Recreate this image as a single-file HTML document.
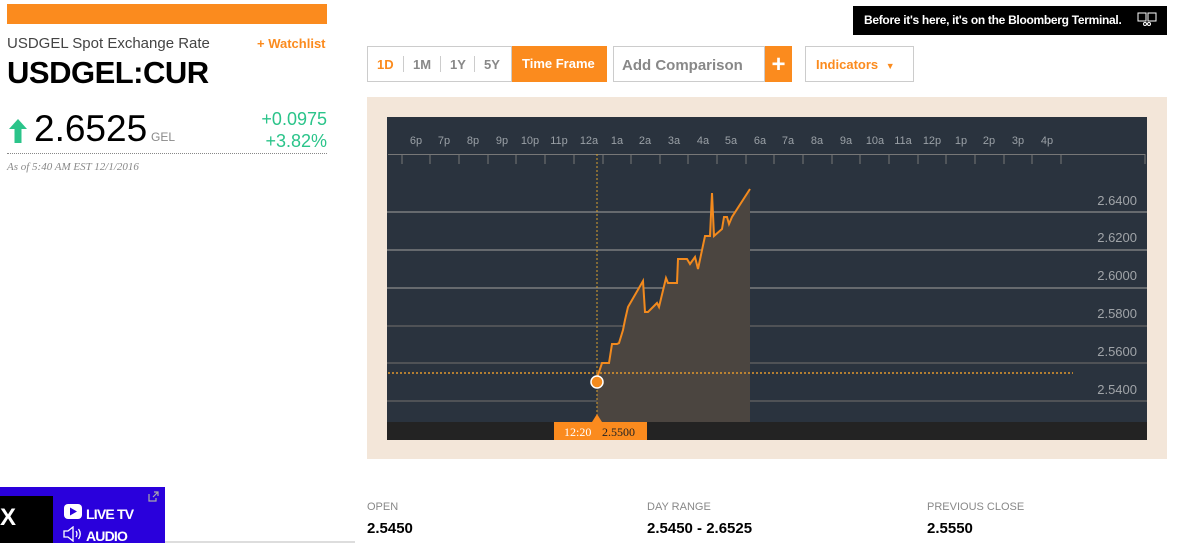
<!DOCTYPE html>
<html><head><meta charset="utf-8"><style>
*{margin:0;padding:0;box-sizing:border-box}
body{width:1191px;height:543px;overflow:hidden;background:#fff;font-family:"Liberation Sans",sans-serif;position:relative}
.a{position:absolute}
.btn{position:absolute;top:46px;height:36px;border:1px solid #ccc;font-weight:bold;font-size:14px}
</style></head><body>
<div class="a" style="left:7px;top:4px;width:320px;height:20px;background:#fb8b1e"></div>
<div class="a" style="left:7px;top:35px;font-size:15px;color:#444">USDGEL Spot Exchange Rate</div>
<div class="a" style="left:257px;top:36px;font-size:13px;color:#fb8b1e;font-weight:bold">+ Watchlist</div>
<div class="a" style="left:7px;top:55px;font-size:31px;font-weight:bold;color:#000;letter-spacing:-0.5px">USDGEL:CUR</div>
<svg class="a" style="left:8px;top:118px" width="20" height="26" viewBox="0 0 20 26"><path d="M10 1 L19 11 L13.5 11 L13.5 25 L6.5 25 L6.5 11 L1 11 Z" fill="#2bc48a"/></svg>
<div class="a" style="left:34px;top:108px;font-size:37px;color:#000">2.6525</div>
<div class="a" style="left:151px;top:130px;font-size:12px;color:#888">GEL</div>
<div class="a" style="left:250px;top:108px;width:77px;text-align:right;font-size:18px;color:#2bc48a;line-height:22px">+0.0975<br>+3.82%</div>
<div class="a" style="left:7px;top:153px;width:320px;border-top:1px dotted #888"></div>
<div class="a" style="left:7px;top:161px;font-size:11px;font-style:italic;color:#888;font-family:'Liberation Serif',serif">As of 5:40 AM EST 12/1/2016</div>

<div class="a" style="left:853px;top:6px;width:314px;height:29px;background:#000;color:#fff;font-size:12px;font-weight:bold;padding:7px 0 0 11px;letter-spacing:-0.3px">Before it's here, it's on the Bloomberg Terminal.</div>
<svg class="a" style="left:1137px;top:12px" width="20" height="16"><rect x="1" y="1" width="8" height="8" fill="none" stroke="#fff"/><rect x="11" y="1" width="8" height="8" fill="none" stroke="#fff"/><circle cx="8" cy="12" r="1.5" fill="none" stroke="#fff"/><circle cx="12" cy="12" r="1.5" fill="none" stroke="#fff"/></svg>

<div class="btn" style="left:367px;width:145px;color:#888;font-size:13px">
<span class="a" style="left:9px;top:10px;color:#fb8b1e">1D</span>
<span class="a" style="left:35px;top:9px;height:16px;border-left:1px solid #ccc"></span>
<span class="a" style="left:45px;top:10px">1M</span>
<span class="a" style="left:72px;top:9px;height:16px;border-left:1px solid #ccc"></span>
<span class="a" style="left:82px;top:10px">1Y</span>
<span class="a" style="left:106px;top:9px;height:16px;border-left:1px solid #ccc"></span>
<span class="a" style="left:116px;top:10px">5Y</span>
</div>
<div class="a" style="left:512px;top:46px;width:95px;height:36px;background:#fb8b1e;color:#fff;font-weight:bold;font-size:13px;padding:10px 0 0 10px">Time Frame</div>
<div class="btn" style="left:613px;width:152px;color:#888;font-size:15px;padding:10px 0 0 8px">Add Comparison</div>
<div class="a" style="left:765px;top:46px;width:27px;height:36px;background:#fb8b1e;color:#fff;font-weight:bold;font-size:24px;text-align:center;line-height:38px">+</div>
<div class="btn" style="left:805px;width:109px;color:#fb8b1e;font-size:13px;padding:10px 0 0 10px">Indicators <span style="font-size:9px;margin-left:4px">▼</span></div>

<div class="a" style="left:367px;top:97px;width:800px;height:362px;background:#f3e6d9"></div>
<svg class="a" style="left:387px;top:117px" width="760" height="323" viewBox="387 117 760 323" font-family="Liberation Sans, sans-serif">
<rect x="387" y="117" width="760" height="305" fill="#2a333e"/>
<rect x="387" y="422" width="760" height="18" fill="#232323"/>
<g font-size="11" fill="#9aa0a6" text-anchor="middle">
<text x="416" y="144">6p</text><text x="444" y="144">7p</text><text x="473" y="144">8p</text><text x="502" y="144">9p</text><text x="530" y="144">10p</text><text x="559" y="144">11p</text><text x="589" y="144">12a</text><text x="617" y="144">1a</text><text x="645" y="144">2a</text><text x="674" y="144">3a</text><text x="703" y="144">4a</text><text x="731" y="144">5a</text><text x="760" y="144">6a</text><text x="788" y="144">7a</text><text x="817" y="144">8a</text><text x="846" y="144">9a</text><text x="875" y="144">10a</text><text x="903" y="144">11a</text><text x="932" y="144">12p</text><text x="961" y="144">1p</text><text x="989" y="144">2p</text><text x="1018" y="144">3p</text><text x="1047" y="144">4p</text>
</g>
<line x1="388" y1="154.5" x2="1145" y2="154.5" stroke="#777"/>
<g stroke="#777">
<line x1="402" y1="154" x2="402" y2="164"/><line x1="430" y1="154" x2="430" y2="164"/><line x1="459" y1="154" x2="459" y2="164"/><line x1="488" y1="154" x2="488" y2="164"/><line x1="516" y1="154" x2="516" y2="164"/><line x1="545" y1="154" x2="545" y2="164"/><line x1="574" y1="154" x2="574" y2="164"/><line x1="603" y1="154" x2="603" y2="164"/><line x1="631" y1="154" x2="631" y2="164"/><line x1="660" y1="154" x2="660" y2="164"/><line x1="688" y1="154" x2="688" y2="164"/><line x1="717" y1="154" x2="717" y2="164"/><line x1="746" y1="154" x2="746" y2="164"/><line x1="774" y1="154" x2="774" y2="164"/><line x1="803" y1="154" x2="803" y2="164"/><line x1="832" y1="154" x2="832" y2="164"/><line x1="860" y1="154" x2="860" y2="164"/><line x1="889" y1="154" x2="889" y2="164"/><line x1="918" y1="154" x2="918" y2="164"/><line x1="946" y1="154" x2="946" y2="164"/><line x1="975" y1="154" x2="975" y2="164"/><line x1="1004" y1="154" x2="1004" y2="164"/><line x1="1032" y1="154" x2="1032" y2="164"/><line x1="1061" y1="154" x2="1061" y2="164"/><line x1="1145" y1="154" x2="1145" y2="164"/>
</g>
<g stroke="#8a8a8a" stroke-width="1.3">
<line x1="387" y1="212" x2="1147" y2="212"/><line x1="387" y1="250" x2="1147" y2="250"/><line x1="387" y1="288" x2="1147" y2="288"/><line x1="387" y1="326" x2="1147" y2="326" stroke="#666"/><line x1="387" y1="363" x2="1147" y2="363" stroke="#666"/><line x1="387" y1="401" x2="1147" y2="401" stroke="#666"/>
</g>
<g font-size="13" fill="#a0a4a8" text-anchor="end">
<text x="1137" y="205">2.6400</text><text x="1137" y="242">2.6200</text><text x="1137" y="280">2.6000</text><text x="1137" y="318">2.5800</text><text x="1137" y="356">2.5600</text><text x="1137" y="394">2.5400</text>
</g>
<path d="M597 382 L598 375 L602 363 L609 363 L612 344 L617 344 L619 343 L623 330 L625 320 L628 307 L643 281 L645 312 L648 312 L657 303 L659 307 L666 278 L668 283 L677 283 L678 259 L687 259 L690 264 L695 257 L698 269 L705 236 L710 236 L712 193 L714 236 L722 229 L724 217 L727 217 L729 224 L732 217 L750 189 L750 422 L597 422 Z" fill="#4b4540"/>
<line x1="388" y1="373" x2="1073" y2="373" stroke="#e0972e" stroke-width="1.5" stroke-dasharray="2 2"/>
<line x1="597" y1="154" x2="597" y2="422" stroke="#d9a02e" stroke-width="1" stroke-dasharray="2 2"/>
<path d="M597 382 L598 375 L602 363 L609 363 L612 344 L617 344 L619 343 L623 330 L625 320 L628 307 L643 281 L645 312 L648 312 L657 303 L659 307 L666 278 L668 283 L677 283 L678 259 L687 259 L690 264 L695 257 L698 269 L705 236 L710 236 L712 193 L714 236 L722 229 L724 217 L727 217 L729 224 L732 217 L750 189" fill="none" stroke="#f28a1e" stroke-width="2"/>
<circle cx="597" cy="382" r="6" fill="#f28a1e" stroke="#fff" stroke-width="1.5"/>
<path d="M554 422 L592 422 L597 414 L602 422 L647 422 L647 440 L554 440 Z" fill="#fb8b1e"/>
<text x="564" y="436" font-size="12" fill="#fff" font-family="Liberation Serif, serif">12:20</text>
<text x="602" y="436" font-size="12" fill="#222" font-family="Liberation Serif, serif">2.5500</text>
</svg>

<div class="a" style="left:367px;top:501px;font-size:11px;color:#888">OPEN</div>
<div class="a" style="left:367px;top:520px;font-size:15px;font-weight:bold;color:#000">2.5450</div>
<div class="a" style="left:647px;top:501px;font-size:11px;color:#888">DAY RANGE</div>
<div class="a" style="left:647px;top:520px;font-size:15px;font-weight:bold;color:#000">2.5450 - 2.6525</div>
<div class="a" style="left:927px;top:501px;font-size:11px;color:#888">PREVIOUS CLOSE</div>
<div class="a" style="left:927px;top:520px;font-size:15px;font-weight:bold;color:#000">2.5550</div>

<div class="a" style="left:0;top:487px;width:165px;height:56px;background:#2a00dc"></div>
<div class="a" style="left:0;top:496px;width:53px;height:47px;background:#000;color:#fff;font-size:24px;font-weight:bold;padding:8px 0 0 0">X</div>
<svg class="a" style="left:148px;top:491px" width="11" height="11"><path d="M1 3 V10 H8 V7" fill="none" stroke="#aaa" stroke-width="1.2"/><path d="M5 6 L10 1 M6 1 H10 V5" fill="none" stroke="#aaa" stroke-width="1.2"/></svg>
<svg class="a" style="left:64px;top:504px" width="18" height="15"><rect x="0" y="0" width="18" height="15" rx="4" fill="#fff"/><path d="M6 3.5 L13 7.5 L6 11.5Z" fill="#2a00dc"/></svg>
<div class="a" style="left:86px;top:506px;color:#fff;font-weight:bold;font-size:14px;letter-spacing:-0.8px">LIVE TV</div>
<svg class="a" style="left:63px;top:526px" width="20" height="16"><path d="M1 5 H5 L10 1 V15 L5 11 H1Z" fill="none" stroke="#fff" stroke-width="1.3"/><path d="M13 5 Q15 8 13 11 M15.5 3 Q19 8 15.5 13" fill="none" stroke="#fff" stroke-width="1.3"/></svg>
<div class="a" style="left:86px;top:528px;color:#fff;font-weight:bold;font-size:14px;letter-spacing:-0.8px">AUDIO</div>
<div class="a" style="left:165px;top:541px;width:190px;height:2px;background:#ddd"></div>
</body></html>
